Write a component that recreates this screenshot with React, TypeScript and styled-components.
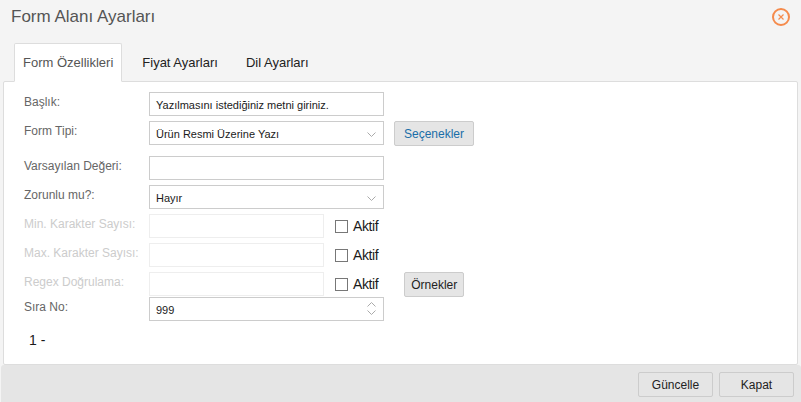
import { createGlobalStyle, styled } from 'styled-components'

const GlobalStyle = createGlobalStyle`
  html, body {
    margin: 0;
    padding: 0;
    background: #f4f4f4;
  }
  body {
    font-family: "Liberation Sans", Arial, sans-serif;
  }
`

const Dialog = styled.div`
  width: 801px;
  height: 402px;
  display: flex;
  flex-direction: column;
  background: #f4f4f4;
  overflow: hidden;
`

const TitleBar = styled.div`
  height: 43px;
  display: flex;
  justify-content: space-between;
  align-items: flex-start;
  padding: 6px 10px 0 11px;
  box-sizing: border-box;
`

const Title = styled.div`
  font-size: 17px;
  line-height: 22px;
  color: #555;
`

const CloseButton = styled.button`
  width: 20px;
  height: 20px;
  margin-top: 1px;
  padding: 0;
  border: none;
  background: transparent;
  display: flex;
`

const Tabs = styled.div`
  height: 39px;
  display: flex;
  padding-left: 14px;
  margin-bottom: -1px;
  position: relative;
  z-index: 1;
`

const Tab = styled.div<{ $active?: boolean }>`
  height: 39px;
  box-sizing: border-box;
  padding: 11px ${p => (p.$active ? '8px' : '7px')} 0 ${p => (p.$active ? '8px' : '19px')};
  font-size: 13px;
  line-height: 16px;
  color: ${p => (p.$active ? '#555' : '#222')};
  background: ${p => (p.$active ? '#fff' : 'transparent')};
  border: 1px solid ${p => (p.$active ? '#ddd' : 'transparent')};
  border-bottom: 1px solid ${p => (p.$active ? '#fff' : 'transparent')};
  border-radius: 2px 2px 0 0;
`

const Panel = styled.div`
  height: 284px;
  margin: 0 3px;
  box-sizing: border-box;
  background: #fff;
  border: 1px solid #ddd;
  border-radius: 2px;
  padding: 10px 0 0 20px;
`

const Row = styled.div<{ $gap?: number }>`
  display: flex;
  align-items: flex-start;
  height: 24px;
  margin-bottom: ${p => p.$gap ?? 5}px;
`

const Label = styled.label<{ $disabled?: boolean }>`
  width: 125px;
  flex-shrink: 0;
  padding-top: 1px;
  font-size: 12px;
  line-height: 18px;
  color: ${p => (p.$disabled ? '#ccc' : '#666')};
`

const Field = styled.div<{ $width?: number; $disabled?: boolean }>`
  width: ${p => p.$width ?? 235}px;
  height: 24px;
  box-sizing: border-box;
  display: flex;
  align-items: center;
  justify-content: space-between;
  padding: 2px 7px 0 6px;
  background: #fff;
  border: 1px solid ${p => (p.$disabled ? '#eee' : '#ccc')};
  font-size: 11px;
  color: #1a1a1a;
`

const Spinner = styled.div`
  display: flex;
  flex-direction: column;
  gap: 3px;
  margin-top: -3px;
`

const CheckLabel = styled.label`
  display: flex;
  align-items: center;
  height: 24px;
  margin-left: 11px;
  font-size: 14px;
  letter-spacing: -0.4px;
  color: #1a1a1a;
`

const Box = styled.span`
  width: 13px;
  height: 13px;
  margin-right: 5px;
  box-sizing: border-box;
  border: 1px solid #777;
  background: #fff;
`

const Button = styled.button<{ $blue?: boolean; $left?: number }>`
  height: 25px;
  padding: 0;
  width: ${p => (p.$blue ? 80 : 60)}px;
  margin-left: ${p => p.$left ?? 10}px;
  font-family: inherit;
  font-size: 12px;
  color: ${p => (p.$blue ? '#1a6ea8' : '#222')};
  background: #e5e5e5;
  border: 1px solid #ccc;
  border-radius: 2px;
`

const Counter = styled.div`
  margin: 10px 0 0 5px;
  font-size: 14px;
  line-height: 18px;
  color: #1a1a1a;
`

const Footer = styled.div`
  flex: 1;
  margin-left: 1px;
  background: #e5e5e5;
  border-radius: 3px 3px 0 0;
  display: flex;
  justify-content: flex-end;
  gap: 6px;
  padding: 7px 7px 0 0;
`

const FooterButton = styled.button`
  width: 75px;
  height: 25px;
  padding: 0;
  font-family: inherit;
  font-size: 12px;
  color: #222;
  background: #e5e5e5;
  border: 1px solid #ccc;
  border-radius: 2px;
`

const Chevron = ({ up }: { up?: boolean }) => (
  <svg width="9" height="5" viewBox="0 0 9 5" fill="none" stroke="#aaa" strokeWidth="1">
    <path d={up ? 'M.5 4.5 4.5.5 8.5 4.5' : 'M.5.5 4.5 4.5 8.5.5'} />
  </svg>
)

const lockedRows = ['Min. Karakter Sayısı:', 'Max. Karakter Sayısı:']

export default function App() {
  return (
    <Dialog>
      <GlobalStyle />
      <TitleBar>
        <Title>Form Alanı Ayarları</Title>
        <CloseButton>
          <svg width="20" height="20" viewBox="0 0 20 20" fill="none" stroke="#f58b4c">
            <circle cx="10" cy="10" r="8" strokeWidth="2" />
            <path d="M7.5 7.5 12.5 12.5M12.5 7.5 7.5 12.5" strokeWidth="1.2" />
          </svg>
        </CloseButton>
      </TitleBar>
      <Tabs>
        <Tab $active>Form Özellikleri</Tab>
        <Tab>Fiyat Ayarları</Tab>
        <Tab>Dil Ayarları</Tab>
      </Tabs>
      <Panel>
        <Row>
          <Label>Başlık:</Label>
          <Field>Yazılmasını istediğiniz metni giriniz.</Field>
        </Row>
        <Row $gap={11}>
          <Label>Form Tipi:</Label>
          <Field>
            Ürün Resmi Üzerine Yazı
            <Chevron />
          </Field>
          <Button $blue>Seçenekler</Button>
        </Row>
        <Row>
          <Label>Varsayılan Değeri:</Label>
          <Field />
        </Row>
        <Row>
          <Label>Zorunlu mu?:</Label>
          <Field>
            Hayır
            <Chevron />
          </Field>
        </Row>
        {lockedRows.map(text => (
          <Row key={text}>
            <Label $disabled>{text}</Label>
            <Field $width={175} $disabled />
            <CheckLabel>
              <Box />
              Aktif
            </CheckLabel>
          </Row>
        ))}
        <Row $gap={1}>
          <Label $disabled>Regex Doğrulama:</Label>
          <Field $width={175} $disabled />
          <CheckLabel>
            <Box />
            Aktif
          </CheckLabel>
          <Button $left={26}>Örnekler</Button>
        </Row>
        <Row $gap={0}>
          <Label>Sıra No:</Label>
          <Field>
            999
            <Spinner>
              <Chevron up />
              <Chevron />
            </Spinner>
          </Field>
        </Row>
        <Counter>1 -</Counter>
      </Panel>
      <Footer>
        <FooterButton>Güncelle</FooterButton>
        <FooterButton>Kapat</FooterButton>
      </Footer>
    </Dialog>
  )
}
